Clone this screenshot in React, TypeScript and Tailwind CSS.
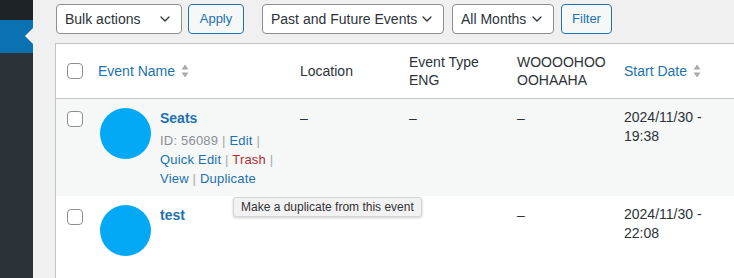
import React from "react";

const font = { fontFamily: '"Liberation Sans", Arial, sans-serif' };

function Chevron() {
  return (
    <svg width="16" height="16" viewBox="0 0 20 20" fill="none" className="shrink-0">
      <path d="M5 7.5l5 5 5-5" stroke="#2c3338" strokeWidth="1.6" strokeLinecap="round" strokeLinejoin="round" />
    </svg>
  );
}

function Select({ label, w }: { label: string; w: string }) {
  return (
    <div className={`${w} h-[30px] flex items-center justify-between pl-[8px] pr-[8px] bg-white border border-[#8c8f94] rounded-[4px] text-[14px] text-[#2c3338]`}>
      <span>{label}</span>
      <Chevron />
    </div>
  );
}

function Btn({ label, w }: { label: string; w: string }) {
  return (
    <div className={`${w} h-[30px] flex items-center justify-center bg-[#f6f7f7] border border-[#2271b1] rounded-[4px] text-[13px] text-[#2271b1]`}>
      {label}
    </div>
  );
}

function Sort() {
  return (
    <svg width="8" height="14" viewBox="0 0 8 14" className="inline-block ml-[6px] align-[-2px]">
      <path d="M4 0.5L7.5 5.5H0.5Z" fill="#a7aaad" />
      <path d="M4 13.5L7.5 8.5H0.5Z" fill="#a7aaad" />
    </svg>
  );
}

function Checkbox() {
  return <div className="w-4 h-4 bg-white border border-[#8c8f94] rounded-[4px]" />;
}

function Sep() {
  return <span className="text-[#a7aaad]"> | </span>;
}

const cols = "grid grid-cols-[32px_202px_109px_108px_107px_120px_100px]";

export default function App() {
  return (
    <div style={font} className="w-[734px] h-[278px] overflow-hidden flex bg-[#f0f0f1] relative">
      <div className="w-[33px] shrink-0 flex flex-col bg-[#2c3338]">
        <div className="h-[20px] bg-[#1d2327]" />
        <div className="h-[33px] bg-[#0a72b0] relative">
          <div className="absolute right-0 top-[8px] w-0 h-0 border-y-[8px] border-y-transparent border-r-[8px] border-r-[#f0f0f1]" />
        </div>
        <div className="flex-1" />
      </div>
      <div className="w-[701px] shrink-0 overflow-hidden pl-[22px] pt-[4px]">
        <div className="flex items-center ml-px">
          <Select label="Bulk actions" w="w-[126px]" />
          <div className="w-[6px]" />
          <Btn label="Apply" w="w-[56px]" />
          <div className="w-[18px]" />
          <Select label="Past and Future Events" w="w-[182px]" />
          <div className="w-[8px]" />
          <Select label="All Months" w="w-[102px]" />
          <div className="w-[7px]" />
          <Btn label="Filter" w="w-[51px]" />
        </div>
        <div className="mt-[9px] w-[800px] border-l border-t border-[#c3c4c7] text-[14px] text-[#2c3338]">
          <div className={`${cols} bg-white h-[55px] border-b border-[#c3c4c7] items-center`}>
            <div className="pl-[11px]"><Checkbox /></div>
            <div className="pl-[10px] text-[#2271b1]">Event Name<Sort /></div>
            <div className="pl-[10px]">Location</div>
            <div className="pl-[10px] leading-[18px]">Event Type<br />ENG</div>
            <div className="pl-[10px] leading-[18px]">WOOOOHOO<br />OOHAAHA</div>
            <div className="pl-[10px] text-[#2271b1] whitespace-nowrap">Start Date<Sort /></div>
            <div />
          </div>
          <div className={`${cols} bg-[#f6f7f7] h-[97px] items-start`}>
            <div className="pl-[11px] pt-[12px]"><Checkbox /></div>
            <div className="pl-[12px] pt-[9px] flex">
              <div className="w-[51px] h-[51px] rounded-full bg-[#03a9f4] shrink-0" />
              <div className="ml-[9px]">
                <div className="font-bold text-[#2271b1] leading-[20px]">Seats</div>
                <div className="mt-[3px] text-[13px] leading-[19px] text-[#2271b1] tracking-[0.2px]">
                  <span className="text-[#8c8f94]">ID: 56089</span><Sep />Edit<Sep /><br />
                  Quick Edit<Sep /><span className="text-[#b32d2e]">Trash</span><Sep /><br />
                  View<Sep />Duplicate
                </div>
              </div>
            </div>
            <div className="pl-[10px] pt-[9px] leading-[20px]">–</div>
            <div className="pl-[10px] pt-[9px] leading-[20px]">–</div>
            <div className="pl-[10px] pt-[9px] leading-[20px]">–</div>
            <div className="pl-[10px] pt-[9px] leading-[19px]">2024/11/30 -<br />19:38</div>
            <div />
          </div>
          <div className={`${cols} bg-white h-[90px] items-start`}>
            <div className="pl-[11px] pt-[13px]"><Checkbox /></div>
            <div className="pl-[12px] pt-[9px] flex">
              <div className="w-[51px] h-[51px] rounded-full bg-[#03a9f4] shrink-0" />
              <div className="ml-[9px]">
                <div className="font-bold text-[#2271b1] leading-[20px]">test</div>
              </div>
            </div>
            <div />
            <div />
            <div className="pl-[10px] pt-[9px] leading-[20px]">–</div>
            <div className="pl-[10px] pt-[9px] leading-[19px]">2024/11/30 -<br />22:08</div>
            <div />
          </div>
        </div>
      </div>
      <div className="absolute left-[233px] top-[197px] h-[20px] px-[7px] flex items-center bg-[#f2f2f2] border border-[#d4d4d4] rounded-[3px] shadow-[0_1px_3px_rgba(0,0,0,0.2)] text-[12px] text-[#333]">
        Make a duplicate from this event
      </div>
    </div>
  );
}
